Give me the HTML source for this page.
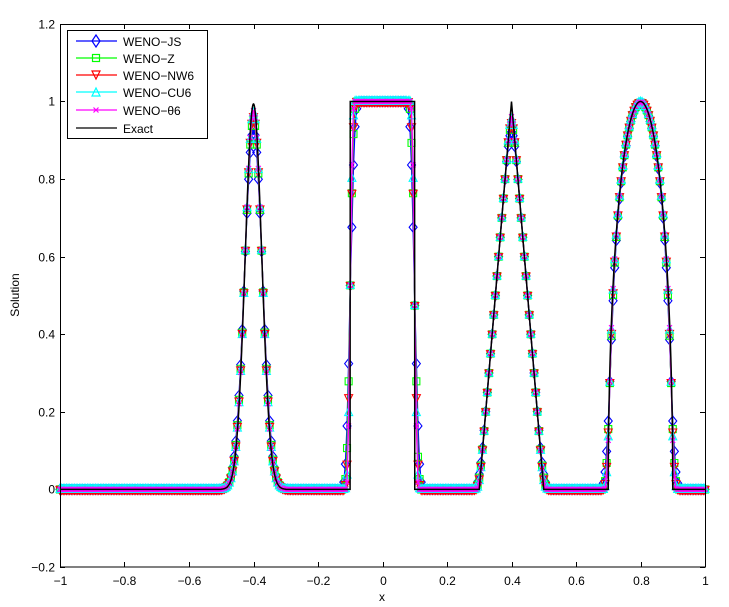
<!DOCTYPE html><html><head><meta charset="utf-8"><style>
html,body{margin:0;padding:0;background:#fff;width:729px;height:607px;overflow:hidden}
svg text{font-family:"Liberation Sans",sans-serif;font-size:12px;fill:#000}
</style></head><body>
<svg id="s" width="729" height="607" xmlns="http://www.w3.org/2000/svg">
<rect width="729" height="607" fill="#fff"/>
<g id="plot"></g>
<g id="axes" stroke="#000" fill="none" stroke-width="1">
<rect x="60.5" y="24.5" width="645" height="542.5"/>
</g>
<g id="labels"></g>
<text x="382" y="601" text-anchor="middle">x</text>
<text transform="translate(19,295) rotate(-90)" text-anchor="middle">Solution</text>
<g>
<rect x="67.5" y="30.5" width="140" height="108" fill="#fff" stroke="#000"/>
<g stroke-width="1.2" fill="none">
<line x1="76" y1="41" x2="117" y2="41" stroke="#0000ff"/><path d="M96 35 L100 41 L96 47 L92 41Z" stroke="#0000ff"/>
<line x1="76" y1="58" x2="117" y2="58" stroke="#00ff00"/><rect x="92.5" y="54.5" width="7" height="7" stroke="#00ff00"/>
<line x1="76" y1="75" x2="117" y2="75" stroke="#ff0000"/><path d="M92 71 L100 71 L96 79Z" stroke="#ff0000"/>
<line x1="76" y1="92" x2="117" y2="92" stroke="#00ffff"/><path d="M92 96 L100 96 L96 88Z" stroke="#00ffff"/>
<line x1="76" y1="110" x2="117" y2="110" stroke="#ff00ff"/><path d="M93.5 107.5 L98.5 112.5 M98.5 107.5 L93.5 112.5" stroke="#ff00ff"/>
<line x1="76" y1="128" x2="117" y2="128" stroke="#000"/>
</g>
<text x="123" y="46">WENO−JS</text>
<text x="123" y="63">WENO−Z</text>
<text x="123" y="80">WENO−NW6</text>
<text x="123" y="97">WENO−CU6</text>
<text x="123" y="115">WENO−θ6</text>
<text x="123" y="133">Exact</text>
</g>
</svg>
<script>
var NS="http://www.w3.org/2000/svg";
function X(x){return 60+(x+1)*322.5}
function Y(y){return 489.4-y*387.9}
function el(t,a,p){var e=document.createElementNS(NS,t);for(var k in a)e.setAttribute(k,a[k]);p.appendChild(e);return e}
var d=0.005,b=Math.log(2)/(36*d*d);
function G(x,z){return Math.exp(-b*(x-z)*(x-z))}
function ex(x){x=x-0.3;if(x<-1)x+=2;
 if(x>=-0.8&&x<=-0.6){var z=-0.7;return (G(x,z-d)+G(x,z+d)+4*G(x,z))/6}
 if(x>=-0.4&&x<=-0.2)return 1;
 if(x>=0&&x<=0.2)return 1-Math.abs(10*(x-0.1));
 if(x>=0.4&&x<=0.6){var v=1-100*(x-0.5)*(x-0.5);return v>0?Math.sqrt(v):0}
 return 0}
function num(x,w){var s=0,n=0;for(var i=-20;i<=20;i++){var t=x+i*w/20;var k=Math.exp(-i*i/120);s+=ex(t)*k;n+=k}return s/n}
var plot=document.getElementById('plot');
var sch=[["#0000ff",0.026,"d"],["#00ff00",0.02,"s"],["#ff0000",0.018,"v"],["#00ffff",0.015,"^"],["#ff00ff",0.013,"x"]];
sch.forEach(function(s){
 var pts=[];for(var i=0;i<=400;i++){var x=-1+i*0.005;pts.push([X(x),Y(num(x,s[1]))])}
 el('polyline',{points:pts.map(function(p){return p[0].toFixed(1)+","+p[1].toFixed(1)}).join(" "),fill:"none",stroke:s[0],"stroke-width":1.3},plot);
 var g=el('g',{fill:"none",stroke:s[0],"stroke-width":1.1},plot);
 pts.forEach(function(p){var x=p[0],y=p[1],dd;
  if(s[2]=="d")dd="M"+x+" "+(y-5)+"L"+(x+4)+" "+y+"L"+x+" "+(y+5)+"L"+(x-4)+" "+y+"Z";
  else if(s[2]=="s")dd="M"+(x-3.5)+" "+(y-3.5)+"h7v7h-7Z";
  else if(s[2]=="v")dd="M"+(x-4)+" "+(y-3)+"L"+(x+4)+" "+(y-3)+"L"+x+" "+(y+5)+"Z";
  else if(s[2]=="^")dd="M"+(x-4)+" "+(y+3)+"L"+(x+4)+" "+(y+3)+"L"+x+" "+(y-5)+"Z";
  else dd="M"+(x-2.5)+" "+(y-2.5)+"L"+(x+2.5)+" "+(y+2.5)+"M"+(x+2.5)+" "+(y-2.5)+"L"+(x-2.5)+" "+(y+2.5);
  el('path',{d:dd},g)});
});
var ep=[];for(var i=0;i<=4000;i++){var x=-1+i*0.0005;ep.push(X(x).toFixed(2)+","+Y(ex(x)).toFixed(2))}
el('polyline',{points:ep.join(" "),fill:"none",stroke:"#000","stroke-width":1.5},plot);
var ax=document.getElementById('axes'),lb=document.getElementById('labels');
for(var i=0;i<=10;i++){var v=-1+i*0.2,x=Math.round(X(v))+0.5;
 el('line',{x1:x,y1:567,x2:x,y2:562},ax);el('line',{x1:x,y1:24,x2:x,y2:29},ax);
 var t=el('text',{x:x,y:585,"text-anchor":"middle"},lb);var s=(Math.abs(v)<1e-9?"0":(+v.toFixed(1)).toString()).replace("-","−");t.textContent=s}
for(var i=0;i<=7;i++){var v=-0.2+i*0.2,y=Math.round(Y(v))+0.5;
 el('line',{x1:60,y1:y,x2:65,y2:y},ax);el('line',{x1:705,y1:y,x2:700,y2:y},ax);
 var t=el('text',{x:55,y:y+4,"text-anchor":"end"},lb);var s=(Math.abs(v)<1e-9?"0":(+v.toFixed(1)).toString()).replace("-","−");t.textContent=s}
</script>
</body></html>
